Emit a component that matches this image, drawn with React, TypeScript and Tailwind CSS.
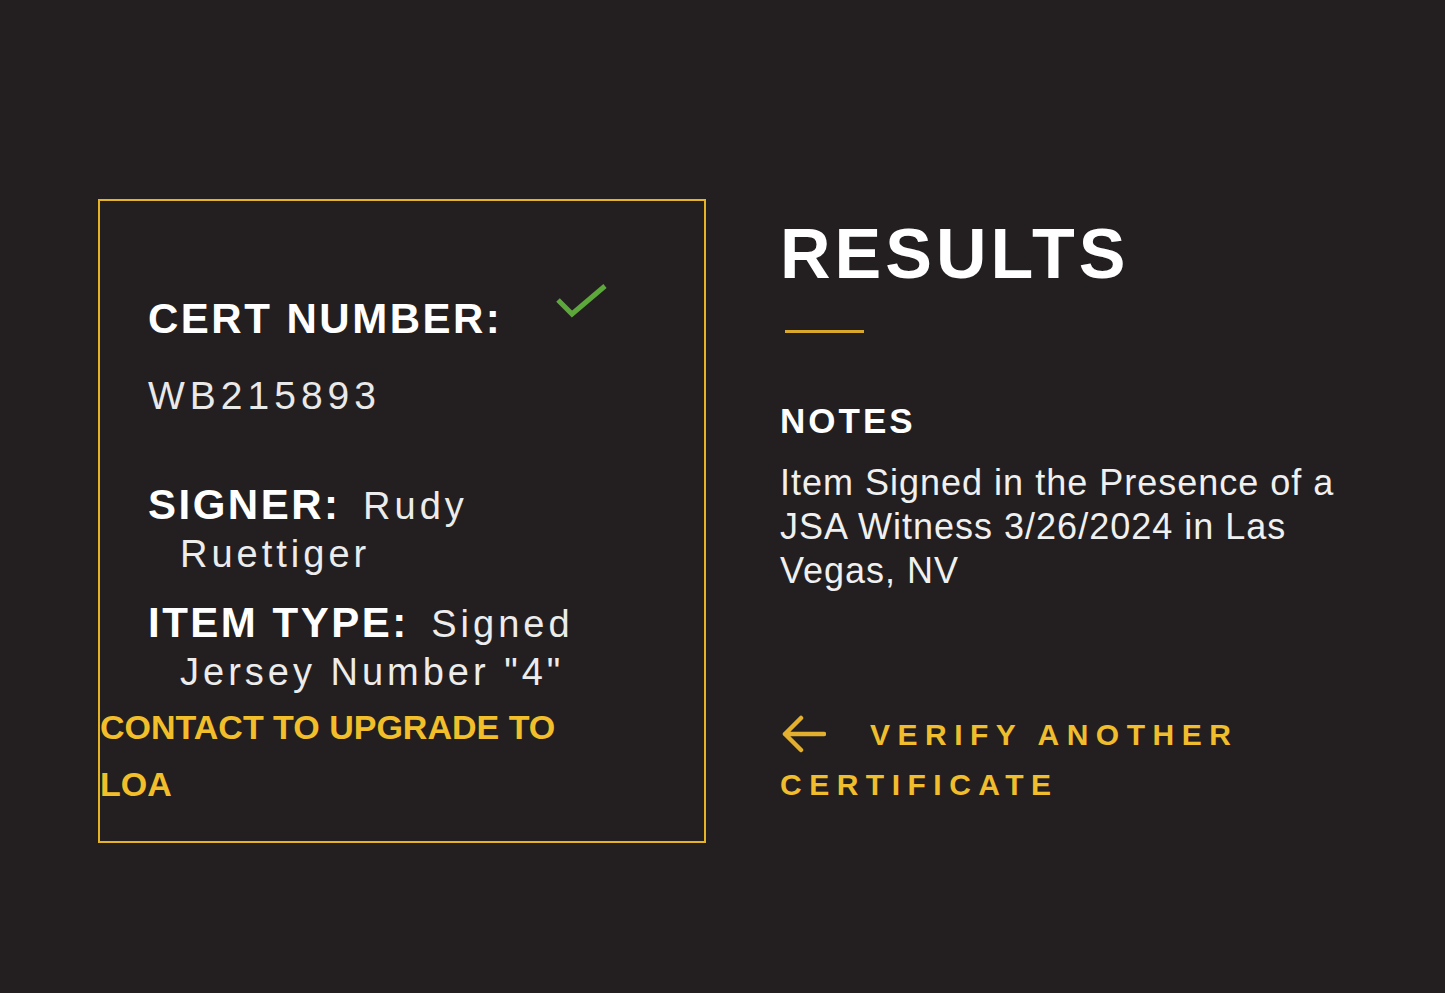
import React from 'react';

const CheckMark: React.FC = () => (
  <svg width="52" height="36" viewBox="0 0 52 36" className="shrink-0 self-start -mt-[11px]">
    <polyline points="2,17 16,31 49,3" fill="none" stroke="#5da83a" strokeWidth="5" strokeLinejoin="miter" />
  </svg>
);

const BackArrow: React.FC = () => (
  <svg width="46" height="40" viewBox="0 0 46 40" className="inline-block align-middle -mt-[6px] mr-[44px]">
    <path d="M44 20H5M21 4 5 20l16 16" fill="none" stroke="#e2b02e" strokeWidth="4.5" strokeLinecap="round" strokeLinejoin="round" />
  </svg>
);

const App: React.FC = () => {
  return (
    <div className="min-h-[993px] w-full bg-[#231f20] font-['Liberation_Sans',Arial,sans-serif] text-[#f2f2f2]">
      <div className="flex items-start pl-[98px] pt-[199px] gap-[74px]">
        {/* Certificate card */}
        <div className="w-[608px] h-[644px] border-2 border-[#e5b426] pt-[93px]">
          <div className="pl-12">
            <div className="flex items-center gap-[54px]">
              <h2 className="text-[42px] leading-[50px] font-bold tracking-[2.5px] text-white">CERT NUMBER:</h2>
              <CheckMark />
            </div>
            <p className="mt-[28px] text-[39px] leading-[48px] tracking-[5px] text-[#e9e9e9]">WB215893</p>

            <p className="mt-[61px] pl-8 -indent-8 text-[38px] leading-[48px] tracking-[4px] text-[#ececec] max-w-[460px]">
              <span className="text-[42px] font-bold tracking-[2.5px] text-white mr-[8px]">SIGNER:</span> Rudy Ruettiger
            </p>
            <p className="mt-[21px] pl-8 -indent-8 text-[38px] leading-[48px] tracking-[4px] text-[#ececec] max-w-[460px]">
              <span className="text-[42px] font-bold tracking-[2.5px] text-white mr-[8px]">ITEM TYPE:</span> Signed Jersey Number "4"
            </p>
          </div>
          <a href="#" className="block mt-[3px] w-[480px] text-[34px] leading-[57px] font-bold text-[#f2bf2a]">
            CONTACT TO UPGRADE TO LOA
          </a>
        </div>

        {/* Results column */}
        <div className="w-[580px] pt-[20px]">
          <h1 className="text-[70px] leading-[70px] font-bold tracking-[4px] text-white">RESULTS</h1>
          <div className="mt-[41px] ml-[5px] w-[79px] h-[3px] bg-[#d9a82a]" />
          <h3 className="mt-[68px] text-[35px] leading-[40px] font-bold tracking-[3px] text-white">NOTES</h3>
          <p className="mt-[20px] text-[36px] leading-[44px] tracking-[1px] text-[#f0f0f0]">
            Item Signed in the Presence of a JSA Witness 3/26/2024 in Las Vegas, NV
          </p>
          <a href="#" className="block mt-[117px] text-[30px] leading-[50px] font-bold tracking-[7.5px] text-[#f0bd2c]">
            <BackArrow />
            VERIFY ANOTHER CERTIFICATE
          </a>
        </div>
      </div>
    </div>
  );
};

export default App;
